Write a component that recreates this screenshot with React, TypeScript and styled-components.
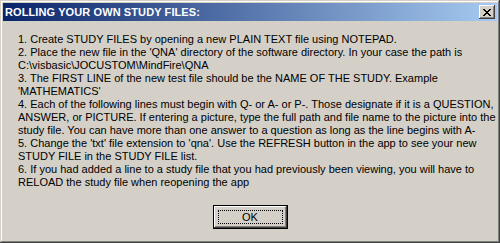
import React from "react";
import styled, { createGlobalStyle } from "styled-components";

const lines = [
	"1. Create STUDY FILES by opening a new PLAIN TEXT file using NOTEPAD.",
	"2. Place the new file in the 'QNA' directory of the software directory. In your case the path is",
	"C:\\visbasic\\JOCUSTOM\\MindFire\\QNA",
	"3. The FIRST LINE of the new test file should be the NAME OF THE STUDY. Example",
	"'MATHEMATICS'",
	"4. Each of the following lines must begin with Q- or A- or P-. Those designate if it is a QUESTION,",
	"ANSWER, or PICTURE. If entering a picture, type the full path and file name to the picture into the",
	"study file. You can have more than one answer to a question as long as the line begins with A-",
	"5. Change the 'txt' file extension to 'qna'. Use the REFRESH button in the app to see your new",
	"STUDY FILE in the STUDY FILE list.",
	"6. If you had added a line to a study file that you had previously been viewing, you will have to",
	"RELOAD the study file when reopening the app",
];

const App = () => {
	return (
		<>
			<GlobalStyle />
			<Window>
				<TitleBar>
					<Title>ROLLING YOUR OWN STUDY FILES:</Title>
					<CloseButton aria-label="Close">
						<svg width="8" height="7" viewBox="0 0 8 7" shapeRendering="crispEdges">
							<path
								fill="#000"
								d="M0 0h2v1h-2zM6 0h2v1h-2zM1 1h2v1h-2zM5 1h2v1h-2zM2 2h4v1h-4zM3 3h2v1h-2zM2 4h4v1h-4zM1 5h2v1h-2zM5 5h2v1h-2zM0 6h2v1h-2zM6 6h2v1h-2z"
							/>
						</svg>
					</CloseButton>
				</TitleBar>

				<Body>
					<Message>
						{lines.map((line, i) => (
							<Line key={i}>{line}</Line>
						))}
					</Message>

					<ButtonRow>
						<OkButton>
							<FocusRing>OK</FocusRing>
						</OkButton>
					</ButtonRow>
				</Body>
			</Window>
		</>
	);
};

export default App;

const GlobalStyle = createGlobalStyle`
	html, body {
		margin: 0;
		padding: 0;
		background: #d4d0c8;
	}
`;

const Window = styled.div`
	width: 500px;
	height: 243px;
	box-sizing: border-box;
	padding: 3px;

	background: #d4d0c8;
	box-shadow: inset -1px -1px #404040, inset 1px 1px #d4d0c8, inset -2px -2px #808080, inset 2px 2px #ffffff;

	display: flex;
	flex-direction: column;

	font-family: "Liberation Sans", Arial, sans-serif;
	font-size: 11px;
	color: #000;
`;

const TitleBar = styled.div`
	height: 18px;
	padding: 0 2px 0 2px;

	background: linear-gradient(to right, #0a246a, #a6caf0);

	display: flex;
	align-items: center;
	justify-content: space-between;
`;

const Title = styled.div`
	font-weight: 700;
	font-size: 11px;
	color: #ffffff;
	white-space: nowrap;
	letter-spacing: 0.1px;
`;

const CloseButton = styled.div`
	width: 16px;
	height: 14px;
	box-sizing: border-box;

	background: #d4d0c8;
	box-shadow: inset -1px -1px #404040, inset 1px 1px #ffffff, inset -2px -2px #808080, inset 2px 2px #d4d0c8;

	display: flex;
	align-items: center;
	justify-content: center;
	padding-right: 1px;
`;

const Body = styled.div`
	flex: 1;
	padding: 12px 0 0 15px;

	display: flex;
	flex-direction: column;
`;

const Message = styled.div`
	display: flex;
	flex-direction: column;
`;

const Line = styled.div`
	height: 13px;
	line-height: 13px;
	white-space: pre;
`;

const ButtonRow = styled.div`
	margin-top: 16px;
	margin-left: -15px;

	display: flex;
	justify-content: center;
`;

const OkButton = styled.div`
	width: 75px;
	height: 24px;
	box-sizing: border-box;
	padding: 4px;

	background: #d4d0c8;
	border: 1px solid #000;
	box-shadow: inset -1px -1px #404040, inset 1px 1px #ffffff, inset -2px -2px #808080, inset 2px 2px #d4d0c8;

	display: flex;
	align-items: stretch;
`;

const FocusRing = styled.div`
	flex: 1;
	border: 1px dotted #000;

	display: flex;
	align-items: center;
	justify-content: center;
`;
